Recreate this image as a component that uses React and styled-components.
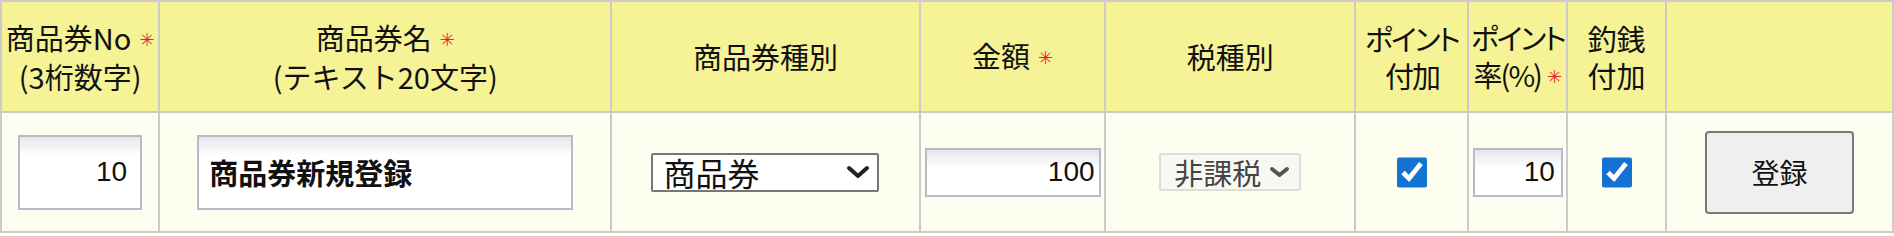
import React from "react";
import styled, { createGlobalStyle } from "styled-components";

const GlobalStyle = createGlobalStyle`
  body {
    margin: 0;
    background: #ffffff;
    font-family: "Noto Sans CJK JP", "Liberation Sans", sans-serif;
  }
`;

const Table = styled.table`
  width: 1894px;
  table-layout: fixed;
  border-collapse: collapse;
  border: 2px solid #cbcbcb;
`;

const Col = styled.col`
  width: ${(p) => p.$w}px;
`;

const Th = styled.th`
  height: 109px;
  padding: 0;
  background: #f5f396;
  border: 2px solid #cbcbcb;
  color: #111;
  font-weight: 400;
  font-size: 29px;
  line-height: 37px;
  text-align: center;
  vertical-align: middle;
  font-feature-settings: ${(p) => (p.$kana ? '"palt"' : "normal")};
  letter-spacing: ${(p) => (p.$kana ? "-2px" : "0")};
  white-space: nowrap;
  overflow: hidden;
`;

const Required = styled.span`
  color: #dd2a2a;
  font-family: "DejaVu Sans", sans-serif;
  font-size: 18px;
  letter-spacing: 0;
  margin-left: ${(p) => p.$ml ?? 8}px;
  vertical-align: 4px;
`;

const Td = styled.td`
  height: 118px;
  padding: 0;
  background: #fefef0;
  border: 2px solid #cbcbcb;
  text-align: center;
  vertical-align: middle;
`;

const TextInput = styled.input`
  box-sizing: border-box;
  width: ${(p) => p.$w}px;
  height: ${(p) => p.$h}px;
  border: 2px solid #b6bbcb;
  background: linear-gradient(to bottom, #e4e6ea 0, #ffffff 18px);
  padding: 0 ${(p) => p.$pr || 10}px 0 10px;
  margin: 0;
  outline: none;
  color: #111;
  text-align: ${(p) => (p.$num ? "right" : "left")};
  font-family: ${(p) =>
    p.$num
      ? '"Liberation Sans", sans-serif'
      : '"Noto Sans CJK JP", sans-serif'};
  font-weight: ${(p) => (p.$num ? 400 : 700)};
  font-size: ${(p) => (p.$num ? 28 : 29)}px;
  vertical-align: middle;
`;

const SelectWrap = styled.span`
  position: relative;
  display: inline-block;
  vertical-align: middle;
  line-height: 0;
`;

const Select = styled.select`
  appearance: none;
  box-sizing: border-box;
  width: ${(p) => p.$w}px;
  height: ${(p) => p.$h}px;
  margin: 0;
  padding: 0 0 0 ${(p) => p.$pl}px;
  border: 2px solid ${(p) => (p.disabled ? "#deded6" : "#767676")};
  border-radius: 2px;
  background: ${(p) => (p.disabled ? "#f8f8f3" : "#ffffff")};
  color: ${(p) => (p.disabled ? "#444444" : "#111111")};
  font-family: "Noto Sans CJK JP", sans-serif;
  font-size: ${(p) => p.$fs}px;
  line-height: ${(p) => p.$h - 4}px;
  opacity: 1;
  outline: none;
`;

const Chevron = styled.svg`
  position: absolute;
  right: ${(p) => p.$r}px;
  top: 50%;
  transform: translateY(-50%);
  pointer-events: none;
`;

const Check = styled.input`
  width: 30px;
  height: 31px;
  margin: 0;
  accent-color: #1473d2;
  vertical-align: middle;
`;

const Button = styled.button`
  box-sizing: border-box;
  width: 149px;
  height: 83px;
  margin: 0;
  background: #efefef;
  border: 2px solid #787878;
  border-radius: 4px;
  color: #111;
  font-family: "Noto Sans CJK JP", sans-serif;
  font-size: 28px;
  vertical-align: middle;
`;

function Dropdown({ w, h, fs, pl, r, cw, ch, color, sw, disabled, value }) {
  return (
    <SelectWrap>
      <Select
        $w={w}
        $h={h}
        $fs={fs}
        $pl={pl}
        disabled={disabled}
        defaultValue={value}
      >
        <option>{value}</option>
      </Select>
      <Chevron $r={r} width={cw} height={ch} viewBox={`0 0 ${cw} ${ch}`}>
        <polyline
          points={`${sw / 2 + 1},${sw / 2 + 1} ${cw / 2},${ch - sw / 2 - 1} ${
            cw - sw / 2 - 1
          },${sw / 2 + 1}`}
          fill="none"
          stroke={color}
          strokeWidth={sw}
          strokeLinecap="round"
          strokeLinejoin="round"
        />
      </Chevron>
    </SelectWrap>
  );
}

export default function App() {
  return (
    <>
      <GlobalStyle />
      <Table>
        <colgroup>
          <Col $w={157} />
          <Col $w={448} />
          <Col $w={306} />
          <Col $w={184} />
          <Col $w={248} />
          <Col $w={112} />
          <Col $w={98} />
          <Col $w={98} />
          <Col $w={225} />
        </colgroup>
        <thead>
          <tr>
            <Th>
              商品券No<Required>✳</Required>
              <br />
              (3桁数字)
            </Th>
            <Th>
              商品券名<Required>✳</Required>
              <br />
              (テキスト20文字)
            </Th>
            <Th>商品券種別</Th>
            <Th>
              金額<Required>✳</Required>
            </Th>
            <Th>税種別</Th>
            <Th $kana>
              ポイント
              <br />
              付加
            </Th>
            <Th $kana>
              ポイント
              <br />
              率(%)<Required $ml={6}>✳</Required>
            </Th>
            <Th>
              釣銭
              <br />
              付加
            </Th>
            <Th></Th>
          </tr>
        </thead>
        <tbody>
          <tr>
            <Td>
              <TextInput $w={124} $h={75} $num $pr={13} defaultValue="10" />
            </Td>
            <Td>
              <TextInput $w={376} $h={75} defaultValue="商品券新規登録" />
            </Td>
            <Td>
              <Dropdown
                w={228}
                h={39}
                fs={32}
                pl={10}
                r={9}
                cw={24}
                ch={14}
                sw={4}
                color="#222"
                value="商品券"
              />
            </Td>
            <Td>
              <TextInput $w={176} $h={49} $num $pr={4} defaultValue="100" />
            </Td>
            <Td>
              <Dropdown
                w={142}
                h={38}
                fs={29}
                pl={13}
                r={11}
                cw={21}
                ch={12}
                sw={4}
                color="#555"
                disabled
                value="非課税"
              />
            </Td>
            <Td>
              <Check type="checkbox" defaultChecked />
            </Td>
            <Td>
              <TextInput $w={90} $h={49} $num $pr={6} defaultValue="10" />
            </Td>
            <Td>
              <Check type="checkbox" defaultChecked />
            </Td>
            <Td>
              <Button type="button">登録</Button>
            </Td>
          </tr>
        </tbody>
      </Table>
    </>
  );
}
